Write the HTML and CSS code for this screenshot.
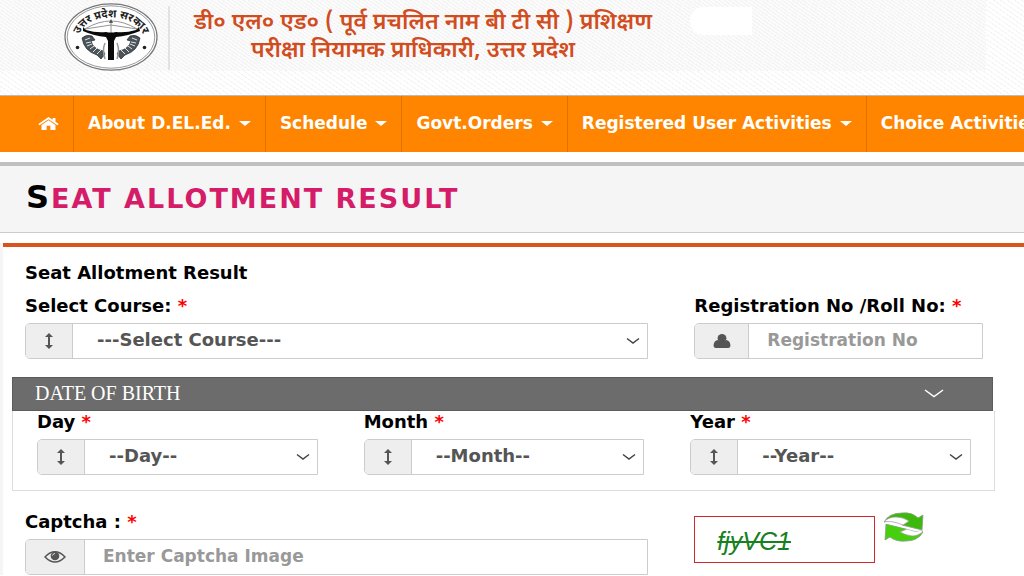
FILE: index.html
```html
<!DOCTYPE html>
<html lang="en">
<head>
    <meta charset="UTF-8">
    <meta name="viewport" content="width=device-width, initial-scale=1.0">
    <title>Seat Allotment Result</title>
    <link rel="stylesheet" href="styles.css">
</head>
<body>
    <header class="header">
        <div class="banner">
            <svg class="emblem" viewBox="0 0 94 68" role="img" aria-label="Emblem">
                <ellipse cx="47" cy="34" rx="46" ry="33.2" fill="#fff" stroke="#777" stroke-width="1.2"/>
                <ellipse cx="47" cy="34" rx="43.8" ry="31.2" fill="none" stroke="#999" stroke-width="1"/>
                <path id="arc" d="M14 36 C18 7 76 7 80 36" fill="none"/>
                <!-- bow and arrow -->
                <path d="M21 26 Q47 10 73 26 M21 26 L47 22 L73 26 M47 17 V30" fill="none" stroke="#888" stroke-width=".9"/>
                <path d="M45 20 L47 16 L49 20 Z" fill="#555"/>
                <text class="emblem-text"><textPath href="#arc" startOffset="50%" text-anchor="middle">उत्तर प्रदेश सरकार</textPath></text>
                <!-- rivers -->
                <path d="M19 24 L22 27 Q32 30 42 29 Q47 30 52 29 Q62 30 72 27 L75 24 L76 28 Q64 33 52 34 L50 38 L50 57 H44 L44 38 L42 34 Q30 33 19 28 Z" fill="#0a0a0a"/>
                <!-- fishes -->
                <path d="M18 35 Q22 31 28 33 L31 37 L27 38 Q29 46 39 48 L41 51 L37 56 L33 52 Q20 48 18 35 Z" fill="#4b555c" stroke="#222" stroke-width=".7"/>
                <path d="M21 37 l5 -2 M22 40 l5 -1 M23 43 l5 -2 M26 46 l4 -3 M29 49 l4 -4 M33 51 l4 -4" stroke="#dfe4e6" stroke-width="1"/>
                <path d="M76 35 Q72 31 66 33 L63 37 L67 38 Q65 46 55 48 L53 51 L57 56 L61 52 Q74 48 76 35 Z" fill="#4b555c" stroke="#222" stroke-width=".7"/>
                <path d="M73 37 l-5 -2 M72 40 l-5 -1 M71 43 l-5 -2 M68 46 l-4 -3 M65 49 l-4 -4 M61 51 l-4 -4" stroke="#dfe4e6" stroke-width="1"/>
                <path d="M41 40 Q38 47 41 56 M53 40 Q56 47 53 56" fill="none" stroke="#999" stroke-width="1.5"/>
                <circle cx="13.500" cy="44.500" r="1.800" fill="#222"/>
                <circle cx="80.500" cy="44.500" r="1.800" fill="#222"/>
            </svg>
            <div class="site-name" lang="hi">
                <span>डी० एल० एड० ( पूर्व प्रचलित नाम बी टी सी ) प्रशिक्षण</span>
                <span class="second">परीक्षा नियामक प्राधिकारी, उत्तर प्रदेश</span>
            </div>
            <div class="patch"></div>
        </div>
    </header>
    <nav class="navbar">
        <a class="home" href="#" aria-label="Home">
            <svg width="21" height="13" viewBox="0 0 22 14"><path d="M11 0 L0 7.500 L1.400 8.800 L11 2.400 L20.600 8.800 L22 7.500 L18.500 5 V1 H15.500 V3 Z M11 3.500 L3.500 8.600 V14 H9 V9.500 H13 V14 H18.500 V8.600 Z" fill="#fff"/></svg>
        </a>
        <a class="menu" href="#">About D.EL.Ed.</a>
        <a class="menu" href="#">Schedule</a>
        <a class="menu" href="#">Govt.Orders</a>
        <a class="menu" href="#">Registered User Activities</a>
        <a class="menu" href="#">Choice Activities</a>
    </nav>
    <section class="title-bar">
        <h1>Seat allotment result</h1>
    </section>
    <main class="content">
        <form class="form">
            <h2>Seat Allotment Result</h2>
            <div class="row">
                <div class="field wide">
                    <label for="course">Select Course: <span class="req">*</span></label>
                    <div class="group">
                        <span class="addon"><svg width="10" height="16" viewBox="0 0 10 16"><path d="M5 0 L9 4 H6 V12 H9 L5 16 L1 12 H4 V4 H1 Z" fill="#555"/></svg></span>
                        <select id="course"><option>---Select Course---</option></select>
                    </div>
                </div>
                <div class="field">
                    <label for="regno">Registration No /Roll No: <span class="req">*</span></label>
                    <div class="group">
                        <span class="addon user"><svg width="18" height="14" viewBox="0 0 18 14"><path d="M5 6 Q1 6.500 .6 11 Q.4 14 3 14 H15 Q17.600 14 17.400 11 Q17 6.500 13 6 Q9 10 5 6 Z" fill="#555"/><ellipse cx="9" cy="4.200" rx="4.400" ry="4.200" fill="#555"/></svg></span>
                        <input id="regno" type="text" placeholder="Registration No">
                    </div>
                </div>
            </div>
            <div class="panel">
                <button class="panel-head" type="button">
                    DATE OF BIRTH
                    <svg width="20" height="9" viewBox="0 0 20 9"><path d="M1 1 L10 7.500 L19 1" fill="none" stroke="#fff" stroke-width="1.500"/></svg>
                </button>
                <div class="panel-body row">
                    <div class="field">
                        <label for="day">Day <span class="req">*</span></label>
                        <div class="group">
                            <span class="addon"><svg width="10" height="16" viewBox="0 0 10 16"><path d="M5 0 L9 4 H6 V12 H9 L5 16 L1 12 H4 V4 H1 Z" fill="#555"/></svg></span>
                            <select id="day"><option>--Day--</option></select>
                        </div>
                    </div>
                    <div class="field">
                        <label for="month">Month <span class="req">*</span></label>
                        <div class="group">
                            <span class="addon"><svg width="10" height="16" viewBox="0 0 10 16"><path d="M5 0 L9 4 H6 V12 H9 L5 16 L1 12 H4 V4 H1 Z" fill="#555"/></svg></span>
                            <select id="month"><option>--Month--</option></select>
                        </div>
                    </div>
                    <div class="field">
                        <label for="year">Year <span class="req">*</span></label>
                        <div class="group">
                            <span class="addon"><svg width="10" height="16" viewBox="0 0 10 16"><path d="M5 0 L9 4 H6 V12 H9 L5 16 L1 12 H4 V4 H1 Z" fill="#555"/></svg></span>
                            <select id="year"><option>--Year--</option></select>
                        </div>
                    </div>
                </div>
            </div>
            <div class="row captcha-row">
                <div class="field wide">
                    <label for="captcha">Captcha : <span class="req">*</span></label>
                    <div class="group">
                        <span class="addon eye"><svg width="22" height="12" viewBox="0 0 22 12"><path d="M1 6 Q11 -4.500 21 6 Q11 16 1 6 Z" fill="#eee" stroke="#555" stroke-width="1.500"/><circle cx="11" cy="5" r="4.300" fill="#555"/><path d="M8.500 4.500 Q9 2.500 11 2.500" fill="none" stroke="#ddd"/></svg></span>
                        <input id="captcha" type="text" placeholder="Enter Captcha Image">
                    </div>
                </div>
                <div class="captcha">
                    <div class="captcha-image">fjyVC1</div>
                    <button class="refresh" type="button" aria-label="Refresh captcha">
                        <svg width="42" height="30" viewBox="0 0 42 30">
                            <path d="M1 10 Q6 1 19 1 Q29 0 35 6 L40 3 L39 18 L19 13 L25 10 Q15 5 1 10 Z" fill="#3db90c" stroke="#8b9b84" stroke-width=".8"/>
                            <path d="M40 20 Q35 29 23 29 Q13 30 7 25 L2 28 L3 12 L24 17 L17 20 Q27 25 40 20 Z" fill="#46cf0d" stroke="#8b9b84" stroke-width=".8"/>
                            <path d="M1 10 Q5 5 13 5 Q20 5 26 9 L20 13 Q8 8 1 10 Z" fill="#fff" stroke="#999" stroke-width=".7"/>
                            <path d="M40 19 Q36 24 29 24 Q22 23 17 20 L24 17 Q33 21 40 19 Z" fill="#fff" stroke="#999" stroke-width=".7"/>
                            <path d="M3 11 L39 20" stroke="#fff" stroke-width="1.2"/>
                        </svg>
                    </button>
                </div>
            </div>
        </form>
    </main>
</body>
</html>
```
FILE: styles.css
```css
* {
    box-sizing: border-box;
}

body {
    margin: 0;
    font-family: "DejaVu Sans", sans-serif;
    font-size: 18px;
    font-weight: 700;
    line-height: 20px;
    color: #000;
    background: #fff;
    overflow-x: hidden;
}

/* Header */
.header {
    padding: 0 38px 24px 0;
    border-bottom: 1px solid #bbb;
    background: repeating-linear-gradient(35deg, #fff 0 3px, #f5f5f5 3px 4px);
}

.banner {
    display: flex;
    align-items: flex-start;
    height: 71px;
    padding-left: 64px;
    background: repeating-linear-gradient(35deg, #fbfbfb 0 2px, #f3f3f3 2px 3px);
}

.emblem {
    width: 94px;
    height: 68px;
    margin-top: 3px;
    flex: none;
}

.emblem-text {
    font-family: "Noto Sans Devanagari", "Noto Sans", sans-serif;
    font-size: 11px;
    font-weight: 700;
    fill: #222;
}

.site-name {
    display: flex;
    flex-direction: column;
    align-items: center;
    margin: 6px 0 0 10px;
    padding: 3px 0 0 24px;
    height: 64px;
    border-left: 2px solid #e2e2e2;
    font-family: "Noto Sans Devanagari", "Noto Sans", sans-serif;
    font-size: 23px;
    font-weight: 600;
    line-height: 28px;
    white-space: nowrap;
    color: #d14d1e;
}

.site-name .second {
    margin-right: 20px;
}

.patch {
    width: 62px;
    height: 28px;
    margin: 7px 0 0 38px;
    border-radius: 14px 0 0 14px;
    background: #fff;
}

/* Navigation */
.navbar {
    display: flex;
    height: 56px;
    overflow: hidden;
    white-space: nowrap;
    font-size: 17px;
    background: #ff8500;
}

.navbar a {
    display: flex;
    align-items: center;
    gap: 8px;
    flex: none;
    padding: 0 14px 2px;
    border-right: 1px solid #dd7300;
    color: #fff;
    text-decoration: none;
}

.navbar .home {
    padding-left: 38px;
}

.navbar .menu::after {
    content: "";
    border: 6px solid transparent;
    border-top: 5px solid #fff;
    border-bottom: 0;
}

/* Page title */
.title-bar {
    margin-top: 10px;
    padding: 12px 26px 16px;
    border-top: 4px solid #c0c0c0;
    border-bottom: 1px solid #ccc;
    background: #f5f5f5;
}

.title-bar h1 {
    height: 38px;
    margin: 0;
    font-size: 27px;
    font-weight: 700;
    line-height: 38px;
    letter-spacing: 2px;
    text-transform: uppercase;
    color: #d41c68;
}

.title-bar h1::first-letter {
    font-size: 32px;
    color: #000;
}

/* Form */
.content {
    margin-top: 10px;
    border-left: 3px solid #f5f5f5;
}

.form {
    padding: 16px 41px 0 22px;
    border-top: 4px solid #d9531e;
}

.form h2 {
    margin: 0 0 13px;
    font-size: 18px;
    font-weight: 700;
    line-height: 20px;
}

.row {
    display: grid;
    grid-template-columns: repeat(3, minmax(0, 1fr));
    column-gap: 46px;
}

.wide {
    grid-column: span 2;
}

.field label {
    display: block;
    margin-bottom: 7px;
    white-space: nowrap;
}

.req {
    color: #f00;
}

.group {
    display: flex;
    height: 36px;
    border: 1px solid #ccc;
    border-radius: 5px 0 0 5px;
}

.addon {
    display: flex;
    align-items: center;
    justify-content: center;
    flex: none;
    width: 47px;
    border-right: 1px solid #ccc;
    border-radius: 4px 0 0 4px;
    background: #eee;
}

.addon.user {
    width: 54px;
}

.addon.eye {
    width: 59px;
}

.group select,
.group input {
    flex: 1;
    min-width: 0;
    padding: 0 18px 2px;
    border: 0;
    border-radius: 0;
    background: #fff;
    font: inherit;
    font-size: 17px;
    color: #555;
}

.group select {
    appearance: none;
    padding: 0 24px 2px;
    font-size: 18px;
    background: #fff url("data:image/svg+xml,%3Csvg xmlns='http://www.w3.org/2000/svg' width='14' height='8'%3E%3Cpath d='M1 1.500 L7 6 L13 1.500' fill='none' stroke='%23444' stroke-width='1.500'/%3E%3C/svg%3E") no-repeat right 7px center;
}

.group input::placeholder {
    color: #999;
    opacity: 1;
}

/* Date of birth panel */
.panel {
    margin: 18px -12px 0 -13px;
}

.panel-head {
    display: flex;
    align-items: center;
    justify-content: space-between;
    width: calc(100% - 2px);
    height: 34px;
    padding: 0 48px 2px 22px;
    border: 1px solid #5c5c5c;
    background: #6c6c6c;
    font-family: "Liberation Serif", serif;
    font-size: 20px;
    color: #fff;
}

.panel-body {
    padding: 1px 23px 15px 24px;
    border: 1px solid #ddd;
    border-top: 0;
}

/* Captcha */
.captcha-row {
    padding-top: 21px;
}

.captcha {
    display: flex;
    align-items: flex-start;
    gap: 8px;
}

.captcha-image {
    width: 181px;
    height: 47px;
    margin-top: 4px;
    padding-left: 22px;
    border: 1px solid #d0282c;
    font-family: "Liberation Sans", sans-serif;
    font-size: 25px;
    font-style: italic;
    font-weight: 400;
    line-height: 48px;
    text-decoration: line-through;
    color: #17801f;
}

.refresh {
    padding: 0;
    border: 0;
    background: none;
}
```
